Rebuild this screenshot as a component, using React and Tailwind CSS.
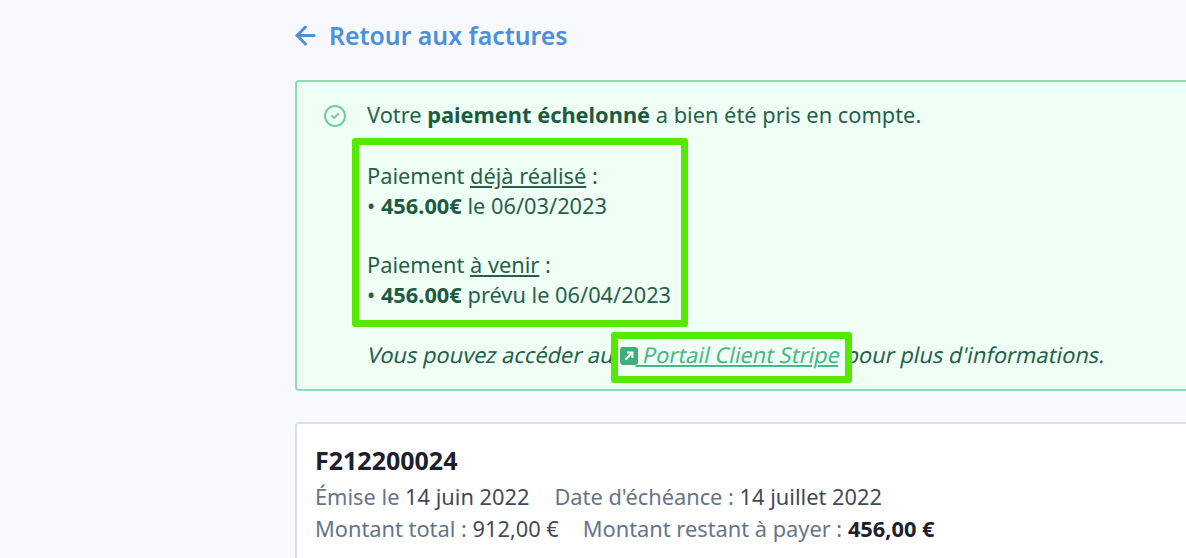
import { ArrowLeft, CircleCheck } from "lucide-react";

const ExternalIcon = () => (
  <svg viewBox="0 0 18 18" className="inline-block w-[18px] h-[18px] align-[-2px] skew-x-12">
    <rect width="18" height="18" rx="3" fill="#3fae7a" />
    <path d="M5.5 12.5 12 6M7 5.5h5.5V11" fill="none" stroke="#effff6" strokeWidth="2" />
  </svg>
);

const App = () => {
  return (
    <div className="relative w-[1186px] h-[558px] overflow-hidden bg-[#f8f9fe] pl-[295px] pt-[17px] font-['Noto_Sans',sans-serif]">
      <a className="flex items-center gap-[9px] -ml-[4px] text-[24.8px] leading-[37px] font-semibold text-[#4a90dc]">
        <ArrowLeft className="w-[29px] h-[29px]" strokeWidth={2.5} />
        Retour aux factures
      </a>

      <div className="relative mt-[26px] w-[1000px] h-[311px] rounded-[4px] border-2 border-[#8bdcb0] bg-[#effff6] pl-[70px] pt-[18px] text-[21.8px] leading-[30px] text-[#27604a]">
        <CircleCheck className="absolute left-[26px] top-[22px] w-[24px] h-[24px] text-[#6fd09e]" strokeWidth={2} />
        <p>
          Votre <b className="font-bold text-[#1e5a40]">paiement échelonné</b> a bien été pris en compte.
        </p>
        <p className="mt-[31px]">
          Paiement <u>déjà réalisé</u> :
          <br />• <b className="font-bold text-[#1e5a40]">456.00€</b> le 06/03/2023
        </p>
        <p className="mt-[29px]">
          Paiement <u>à venir</u> :
          <br />• <b className="font-bold text-[#1e5a40]">456.00€</b> prévu le 06/04/2023
        </p>
        <p className="mt-[30px] -skew-x-12 origin-bottom-left -ml-[2px]">
          Vous pouvez accéder au <ExternalIcon />
          <a className="underline text-[#4cb585]"> Portail Client Stripe</a> pour plus d'informations.
        </p>

        {/* annotation boxes over the alert */}
        <div className="absolute left-[55px] top-[56px] w-[336px] h-[189px] rounded-[3px] border-[7px] border-[#55e800]" />
        <div className="absolute left-[314px] top-[250px] w-[241px] h-[51px] rounded-[3px] border-[7px] border-[#55e800]" />
      </div>

      <div className="mt-[31px] w-[1000px] h-[200px] rounded-[4px] border-2 border-[#d8deea] bg-white pl-[18px] pt-[18px]">
        <h2 className="mb-[2px] text-[25px] leading-[36px] font-bold text-[#1a202c]">F212200024</h2>
        <div className="flex gap-[25px] text-[21.8px] leading-[33px] text-[#64748b]">
          <span>Émise le <span className="text-[#3f4a5c]">14 juin 2022</span></span>
          <span>Date d'échéance : <span className="text-[#3f4a5c]">14 juillet 2022</span></span>
        </div>
        <div className="flex gap-[24px] -mt-px text-[21.8px] leading-[33px] text-[#64748b]">
          <span>Montant total : <span className="text-[#3f4a5c]">912,00 €</span></span>
          <span>Montant restant à payer : <b className="font-bold text-[#1a202c]">456,00 €</b></span>
        </div>
      </div>
    </div>
  );
};

export default App;
